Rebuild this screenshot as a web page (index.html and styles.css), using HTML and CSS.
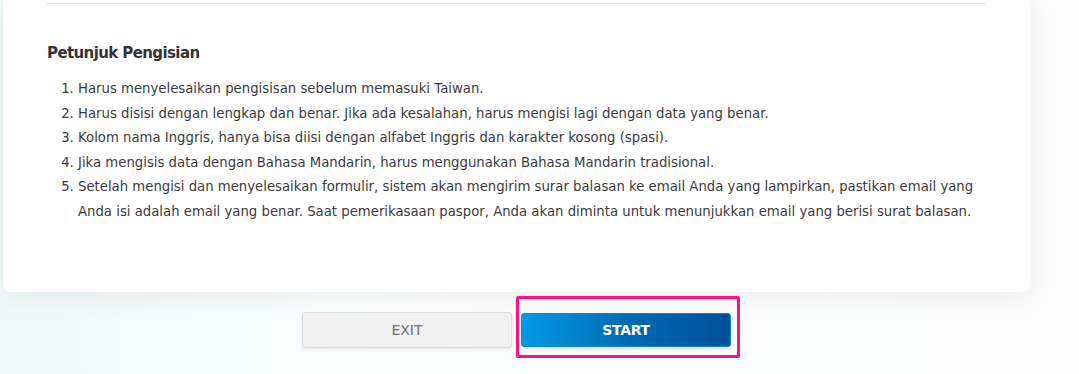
FILE: index.html
```html
<!DOCTYPE html>
<html lang="id">

<head>
    <meta charset="UTF-8">
    <meta name="viewport" content="width=device-width, initial-scale=1.0">
    <title>Petunjuk Pengisian</title>
    <link rel="stylesheet" href="styles.css">
</head>

<body>
    <div class="page">
        <div class="card">
            <hr class="divider">

            <h3 class="notice-title">Petunjuk Pengisian</h3>
            <ol class="notice-list">
                <li>Harus menyelesaikan pengisisan sebelum memasuki Taiwan.</li>
                <li>Harus disisi dengan lengkap dan benar. Jika ada kesalahan, harus mengisi lagi dengan data yang benar.</li>
                <li>Kolom nama Inggris, hanya bisa diisi dengan alfabet Inggris dan karakter kosong (spasi).</li>
                <li>Jika mengisis data dengan Bahasa Mandarin, harus menggunakan Bahasa Mandarin tradisional.</li>
                <li>Setelah mengisi dan menyelesaikan formulir, sistem akan mengirim surar balasan ke email Anda yang lampirkan, pastikan email yang Anda isi adalah email yang benar. Saat pemerikasaan paspor, Anda akan diminta untuk menunjukkan email yang berisi surat balasan.</li>
            </ol>
        </div>

        <div class="actions">
            <button class="btn btn-exit">EXIT</button>
            <div class="start-wrap">
                <button class="btn btn-start">START</button>
                <span class="highlight"></span>
            </div>
        </div>
    </div>
</body>

</html>
```

FILE: styles.css
```css
body {
    margin: 0;
    font-family: "DejaVu Sans", sans-serif;
    color: #333;
    background: linear-gradient(90deg, #eef9f9 0%, #fbfefe 30%, #fcfcfc 100%);
    height: 374px;
    overflow: hidden;
}

.page {
    width: 1027px;
    margin-left: 3px;
}

.card {
    background-color: white;
    padding: 3px 45px 67px 44px;
    border-radius: 0 0 8px 8px;
    box-shadow: 0 4px 30px rgba(0, 0, 0, 0.07);
}

.divider {
    margin: 0;
    border: none;
    border-top: 1px solid #dedede;
}

.notice-title {
    margin: 39px 0 14px;
    font-size: 15px;
    line-height: 20px;
    letter-spacing: -0.6px;
    font-weight: bold;
    color: #333;
}

.notice-list {
    margin: 0;
    padding-left: 31px;
    font-size: 13.25px;
    line-height: 24.6px;
    color: #3a3a3a;
}

.actions {
    display: flex;
    justify-content: center;
    gap: 9px;
    margin-top: 20px;
}

.btn {
    width: 210px;
    height: 36px;
    border-radius: 3px;
    font-family: "DejaVu Sans", sans-serif;
    font-size: 14px;
    cursor: pointer;
}

.btn-exit {
    background-color: #f0f0f0;
    border: 1px solid #dcdcdc;
    color: #6f6f6f;
    box-shadow: 0 2px 4px rgba(0, 0, 0, 0.08);
}

.start-wrap {
    position: relative;
    margin-top: 1px;
}

.btn-start {
    height: 34px;
    background: linear-gradient(90deg, #009be3 0%, #0067b0 55%, #00509a 100%);
    border: 1px solid #0a8ad6;
    color: white;
    font-weight: bold;
    letter-spacing: -0.3px;
    box-shadow: 0 2px 5px rgba(0, 0, 0, 0.12);
}

.highlight {
    position: absolute;
    top: -17px;
    left: -5px;
    right: -9px;
    bottom: -10px;
    border: 3px solid #ff1180;
    border-radius: 2px;
    pointer-events: none;
}
```
